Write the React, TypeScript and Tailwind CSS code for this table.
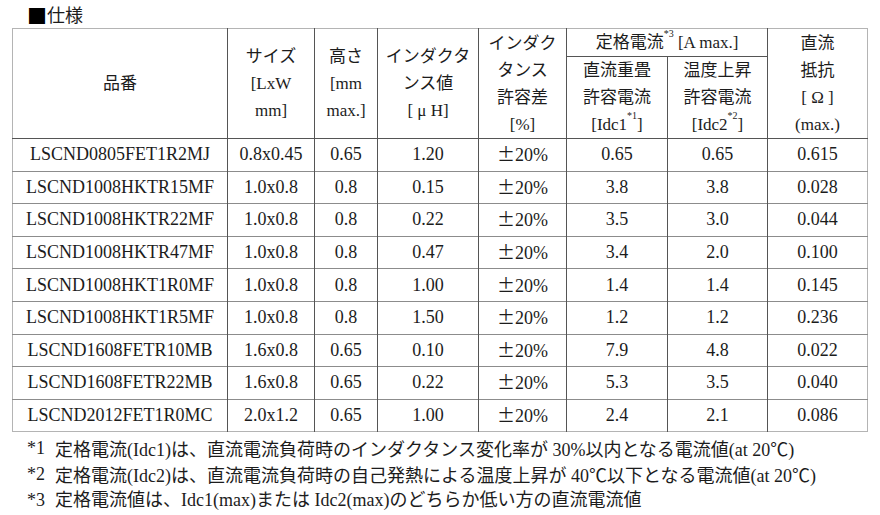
const rows = [
  ['LSCND0805FET1R2MJ', '0.8x0.45', '0.65', '1.20', '20%', '0.65', '0.65', '0.615'],
  ['LSCND1008HKTR15MF', '1.0x0.8', '0.8', '0.15', '20%', '3.8', '3.8', '0.028'],
  ['LSCND1008HKTR22MF', '1.0x0.8', '0.8', '0.22', '20%', '3.5', '3.0', '0.044'],
  ['LSCND1008HKTR47MF', '1.0x0.8', '0.8', '0.47', '20%', '3.4', '2.0', '0.100'],
  ['LSCND1008HKT1R0MF', '1.0x0.8', '0.8', '1.00', '20%', '1.4', '1.4', '0.145'],
  ['LSCND1008HKT1R5MF', '1.0x0.8', '0.8', '1.50', '20%', '1.2', '1.2', '0.236'],
  ['LSCND1608FETR10MB', '1.6x0.8', '0.65', '0.10', '20%', '7.9', '4.8', '0.022'],
  ['LSCND1608FETR22MB', '1.6x0.8', '0.65', '0.22', '20%', '5.3', '3.5', '0.040'],
  ['LSCND2012FET1R0MC', '2.0x1.2', '0.65', '1.00', '20%', '2.4', '2.1', '0.086'],
]

const widths = ['w-[215px]', 'w-[87px]', 'w-[63px]', 'w-[101px]', 'w-[88px]', 'w-[101px]', 'w-[100px]', 'w-[100px]']

export default function App() {
  return (
    <div className="w-[880px] h-[515px] bg-white pl-[12px] pt-[4px] text-[#1c1c1c] font-['Liberation_Serif','Noto_Sans_CJK_JP',serif]">
      <div className="pl-[15px] h-[24px] leading-[24px] text-[18px] flex items-center">
        <span className="flex-none text-black font-['Noto_Sans_CJK_JP',sans-serif] text-[20px] leading-[24px]">■</span>
        <span>仕様</span>
      </div>

      <table className="w-[855px] table-fixed border-collapse border border-[#b4b4b4] text-center">
        <colgroup>
          {widths.map((w, i) => <col key={i} className={w} />)}
        </colgroup>
        <thead className="text-[17px] leading-[27px]">
          <tr className="h-[27px]">
            <Th rowSpan={2}>品番</Th>
            <Th rowSpan={2}>サイズ<br />[LxW<br />mm]</Th>
            <Th rowSpan={2}>高さ<br />[mm<br />max.]</Th>
            <Th rowSpan={2}>インダクタ<br />ンス値<br />[ μ H]</Th>
            <Th rowSpan={2}>インダク<br />タンス<br />許容差<br />[%]</Th>
            <Th colSpan={2}>
              定格電流<sup className="text-[10px] align-[6px]">*3</sup> [A max.]
            </Th>
            <Th rowSpan={2}>直流<br />抵抗<br />[ Ω ]<br />(max.)</Th>
          </tr>
          <tr className="h-[81px]">
            <Th>直流重畳<br />許容電流<br />[Idc1<sup className="text-[10px] align-[6px]">*1</sup>]</Th>
            <Th>温度上昇<br />許容電流<br />[Idc2<sup className="text-[10px] align-[6px]">*2</sup>]</Th>
          </tr>
        </thead>
        <tbody className="text-[18px]">
          {rows.map((r) => (
            <tr key={r[0]} className="h-[32.6px] border-t border-[#8c8c8c]">
              {r.map((c, i) => (
                <td key={i} className="p-0 border-l border-[#555] first:border-l-0 whitespace-nowrap">
                  {i === 4 && <span className="font-['Noto_Sans_CJK_JP',sans-serif] inline-block w-[18px] text-center">±</span>}
                  {c}
                </td>
              ))}
            </tr>
          ))}
        </tbody>
      </table>

      <div className="mt-[4px] pl-[15px] text-[18px] leading-[24px]">
        <Note n="*1">定格電流(Idc1)は、直流電流負荷時のインダクタンス変化率が 30%以内となる電流値(at 20<Deg />)</Note>
        <Note n="*2">定格電流(Idc2)は、直流電流負荷時の自己発熱による温度上昇が 40<Deg />以下となる電流値(at 20<Deg />)</Note>
        <Note n="*3">定格電流値は、Idc1(max)または Idc2(max)のどちらか低い方の直流電流値</Note>
      </div>
    </div>
  )
}

function Deg() {
  return <span className="font-['Noto_Sans_CJK_JP',sans-serif]">℃</span>
}

function Th({ children, rowSpan, colSpan }: { children: React.ReactNode; rowSpan?: number; colSpan?: number }) {
  return (
    <th
      rowSpan={rowSpan}
      colSpan={colSpan}
      className="p-0 font-normal border border-[#555] border-t-0 first:border-l-0 last:border-r-0 align-middle whitespace-nowrap"
    >
      {children}
    </th>
  )
}

function Note({ n, children }: { n: string; children: React.ReactNode }) {
  return (
    <div className="flex whitespace-nowrap">
      <span className="w-[28px]">{n}</span>
      <span>{children}</span>
    </div>
  )
}
